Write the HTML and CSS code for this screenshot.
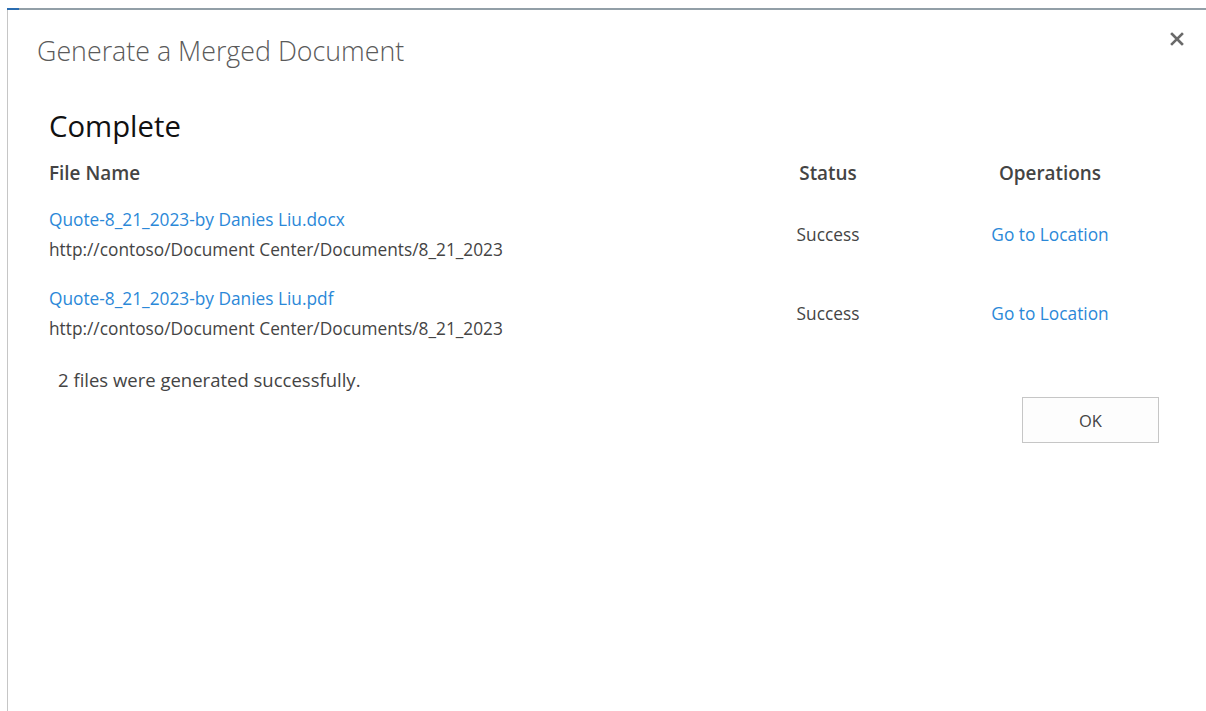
FILE: index.html
```html
<!DOCTYPE html>
<html lang="en">
<head>
<meta charset="utf-8">
<title>Generate a Merged Document</title>
<link rel="stylesheet" href="styles.css">
</head>
<body>
<div class="dialog">
  <span class="accent"></span>
  <header class="dialog-head">
    <h1 class="dialog-title">Generate a Merged Document</h1>
    <button class="close" type="button" aria-label="Close">
      <svg width="14" height="14" viewBox="0 0 14 14"><path d="M2 2 L12 12 M12 2 L2 12" stroke="#6a6a6a" stroke-width="2.6" stroke-linecap="square"/></svg>
    </button>
  </header>
  <main class="dialog-body">
    <h2 class="state">Complete</h2>
    <div class="results">
      <div class="th">File Name</div>
      <div class="th center">Status</div>
      <div class="th center">Operations</div>

      <div class="cell file">
        <a class="link" href="#">Quote-8_21_2023-by Danies Liu.docx</a>
        <span class="path">http://contoso/Document Center/Documents/8_21_2023</span>
      </div>
      <div class="cell center mid">Success</div>
      <div class="cell center mid"><a class="link" href="#">Go to Location</a></div>

      <div class="cell file">
        <a class="link" href="#">Quote-8_21_2023-by Danies Liu.pdf</a>
        <span class="path">http://contoso/Document Center/Documents/8_21_2023</span>
      </div>
      <div class="cell center mid">Success</div>
      <div class="cell center mid"><a class="link" href="#">Go to Location</a></div>
    </div>
    <p class="summary">2 files were generated successfully.</p>
    <div class="actions">
      <button class="btn" type="button">OK</button>
    </div>
  </main>
</div>
</body>
</html>
```
FILE: styles.css
```css
html, body {
  margin: 0;
  padding: 0;
  background: #fff;
}

body {
  font-family: "Open Sans", "Noto Sans", sans-serif;
  color: #444;
}

.dialog {
  position: relative;
  margin: 8px 0 0 7px;
  height: 703px;
  box-sizing: border-box;
  border-top: 2px solid #929fa7;
  border-left: 1px solid #c6c6c6;
}

/* short blue cap at the start of the top rule */
.accent {
  position: absolute;
  left: -1px;
  top: -2px;
  width: 12px;
  height: 2px;
  background: #2a6cb0;
}

.dialog-head {
  display: flex;
  justify-content: space-between;
  align-items: flex-start;
  padding: 24px 22px 0 29px;
}

.dialog-title {
  margin: 0;
  font-size: 26.8px;
  font-weight: 300;
  line-height: 34px;
  color: #5a5a5a;
}

.close {
  border: 0;
  background: none;
  padding: 0;
  margin-top: -2px;
  width: 14px;
  height: 14px;
  cursor: pointer;
}

.close svg {
  display: block;
}

.dialog-body {
  padding: 0 47px 0 41px;
}

.state {
  margin: 40px 0 0;
  font-size: 29.3px;
  font-weight: 400;
  line-height: 36px;
  color: #111;
}

.results {
  display: grid;
  grid-template-columns: 1fr 244px 200px;
  width: 1101px;
  margin-top: 17px;
}

.th {
  font-size: 18.9px;
  font-weight: 600;
  line-height: 24px;
  padding-bottom: 1px;
  color: #444;
}

.center {
  text-align: center;
}

.cell {
  font-size: 17.3px;
  line-height: 30px;
  margin-top: 19px;
}

.file {
  display: flex;
  flex-direction: column;
}

.mid {
  align-self: center;
  color: #444;
}

.link {
  color: #2b88d8;
  text-decoration: none;
}

.path {
  color: #444;
}

.summary {
  margin: 23px 0 0 9px;
  font-size: 18.5px;
  line-height: 26px;
  color: #444;
}

.actions {
  display: flex;
  justify-content: flex-end;
  width: 1110px;
  margin-top: 4px;
}

.btn {
  width: 137px;
  height: 46px;
  border: 1px solid #c6c6c6;
  background: #fdfdfd;
  font-family: inherit;
  font-size: 16.5px;
  color: #444;
  padding: 0;
}
```
